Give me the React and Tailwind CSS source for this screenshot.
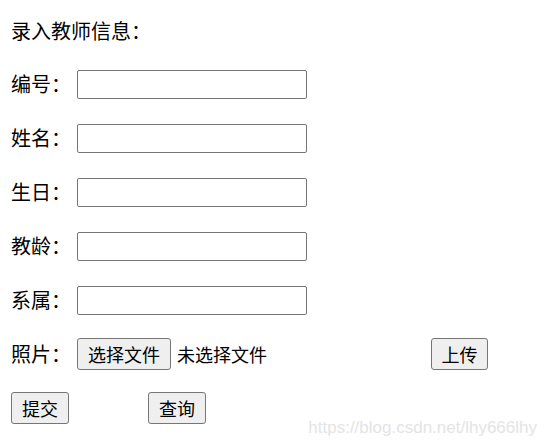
import React from 'react';

const FIELDS = ['编号', '姓名', '生日', '教龄', '系属'];

const font = "font-['Microsoft_YaHei','Noto_Sans_CJK_SC',sans-serif]";

function Button({ children, className = '' }) {
  return (
    <button
      type="button"
      className={`flex h-[32px] items-center justify-center whitespace-nowrap rounded-[3px] border border-[#767676] bg-[#efefef] px-0 text-[18px] leading-none text-black ${className}`}
    >
      {children}
    </button>
  );
}

export default function App() {
  return (
    <div className={`relative h-[447px] w-[547px] overflow-hidden bg-white pl-[11px] pt-[3px] text-[20px] text-black ${font}`}>
      <div className="flex h-[54px] items-center pt-[2px]">录入教师信息：</div>

      {FIELDS.map((label) => (
        <div key={label} className="flex h-[54px] items-center">
          <span className="w-[66px] shrink-0">{label}：</span>
          <input type="text" className="h-[29px] w-[230px] rounded-[2px] border border-[#767676] bg-white outline-none" />
        </div>
      ))}

      <div className="flex h-[54px] items-center">
        <span className="w-[66px] shrink-0">照片：</span>
        <Button className="w-[94px]">选择文件</Button>
        <span className="ml-[6px] w-[254px] text-[18px]">未选择文件</span>
        <Button className="w-[57px]">上传</Button>
      </div>

      <div className="flex h-[54px] items-center">
        <Button className="w-[58px]">提交</Button>
        <Button className="ml-[79px] w-[58px]">查询</Button>
      </div>

      <div className="absolute right-[10px] top-[417px] font-['Liberation_Sans',Arial,sans-serif] text-[17px] leading-[22px] text-[#e4e4e4]">
        https://blog.csdn.net/lhy666lhy
      </div>
    </div>
  );
}
